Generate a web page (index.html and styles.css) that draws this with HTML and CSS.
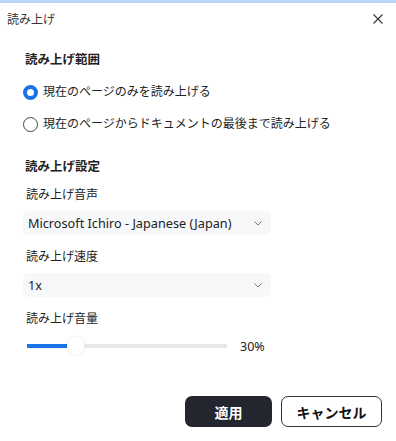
FILE: index.html
```html
<!DOCTYPE html>
<html lang="ja">
<head>
    <meta charset="UTF-8">
    <meta name="viewport" content="width=device-width, initial-scale=1.0">
    <title>読み上げ</title>
    <link rel="stylesheet" href="styles.css">
</head>
<body>
    <div class="dialog">
        <div class="dialog-header">
            <span class="dialog-title">読み上げ</span>
            <button class="close" aria-label="閉じる">
                <svg width="10" height="10" viewBox="0 0 10 10"><path d="M0.5 0.5 L9.5 9.5 M9.5 0.5 L0.5 9.5" stroke="#333" stroke-width="1.1" fill="none"/></svg>
            </button>
        </div>

        <div class="dialog-body">
            <div class="section-title">読み上げ範囲</div>
            <label class="radio-row">
                <input type="radio" name="range" checked>
                <span class="radio"></span>
                <span>現在のページのみを読み上げる</span>
            </label>
            <label class="radio-row">
                <input type="radio" name="range">
                <span class="radio"></span>
                <span>現在のページからドキュメントの最後まで読み上げる</span>
            </label>

            <div class="section-title settings">読み上げ設定</div>

            <div class="field-label">読み上げ音声</div>
            <div class="select">
                <span>Microsoft Ichiro - Japanese (Japan)</span>
                <svg class="chevron" width="8" height="5" viewBox="0 0 8 5"><path d="M0.5 0.5 L4 4 L7.5 0.5" stroke="#777" stroke-width="1" fill="none"/></svg>
            </div>

            <div class="field-label">読み上げ速度</div>
            <div class="select">
                <span>1x</span>
                <svg class="chevron" width="8" height="5" viewBox="0 0 8 5"><path d="M0.5 0.5 L4 4 L7.5 0.5" stroke="#777" stroke-width="1" fill="none"/></svg>
            </div>

            <div class="field-label">読み上げ音量</div>
            <div class="slider-row">
                <div class="slider">
                    <div class="slider-fill" style="width: 20%"></div>
                    <div class="slider-thumb"></div>
                    <div class="slider-rest"></div>
                </div>
                <span class="slider-value">30%</span>
            </div>
        </div>

        <div class="dialog-footer">
            <button class="btn primary">適用</button>
            <button class="btn secondary">キャンセル</button>
        </div>
    </div>
</body>
</html>
```

FILE: styles.css
```css
body {
    margin: 0;
    background-color: #ffffff;
    font-family: "Noto Sans", "Noto Sans CJK JP", sans-serif;
    color: #222;
}

.dialog {
    width: 396px;
    height: 441px;
    box-sizing: border-box;
    border-top: 3px solid #b5d5f3;
    display: flex;
    flex-direction: column;
}

.dialog-header {
    display: flex;
    justify-content: space-between;
    align-items: center;
    height: 32px;
    padding: 0 8px 0 7px;
}

.dialog-title {
    font-size: 12px;
    color: #333;
}

.close {
    background: none;
    border: none;
    padding: 0;
    width: 20px;
    height: 20px;
    display: flex;
    align-items: center;
    justify-content: center;
    cursor: pointer;
}

.dialog-body {
    padding: 16px 25px 0 23px;
    display: flex;
    flex-direction: column;
}

.section-title {
    font-size: 12.5px;
    font-weight: bold;
    margin-left: 2px;
    line-height: 18px;
    margin-bottom: 14px;
}

.section-title.settings {
    margin-top: 11px;
    margin-bottom: 10px;
}

.radio-row {
    display: flex;
    align-items: center;
    gap: 5px;
    font-size: 12px;
    line-height: 18px;
    margin-bottom: 14px;
    cursor: pointer;
}

.radio-row input {
    display: none;
}

.radio {
    width: 15px;
    height: 15px;
    box-sizing: border-box;
    border-radius: 50%;
    border: 1px solid #444;
    background: #fff;
}

.radio-row input:checked + .radio {
    border: 4.5px solid #1a73e8;
}

.field-label {
    font-size: 12px;
    line-height: 18px;
    margin-left: 3px;
    margin-bottom: 7px;
}

.select {
    width: 248px;
    height: 24px;
    box-sizing: border-box;
    background-color: #f7f8fa;
    border-radius: 5px;
    display: flex;
    align-items: center;
    justify-content: space-between;
    padding: 0 9px 0 5px;
    font-size: 12.7px;
    margin-bottom: 13px;
}

.chevron {
    margin-top: 1px;
}

.slider-row {
    display: flex;
    align-items: center;
    gap: 13px;
    margin-top: 2px;
    margin-left: 4px;
}

.slider {
    width: 200px;
    height: 18px;
    display: flex;
    align-items: center;
}

.slider-fill {
    height: 4px;
    background-color: #1a73e8;
}

.slider-thumb {
    width: 18px;
    height: 18px;
    border-radius: 50%;
    background: #fff;
    box-shadow: 0 0 3px rgba(0, 0, 0, 0.12);
    flex-shrink: 0;
}

.slider-rest {
    flex: 1;
    height: 4px;
    background-color: #e8e8e8;
    margin-left: -1px;
}

.slider-value {
    font-size: 12.5px;
}

.dialog-footer {
    margin-top: auto;
    display: flex;
    justify-content: flex-end;
    gap: 9px;
    padding: 0 14px 14px 0;
}

.btn {
    height: 31px;
    border-radius: 7px;
    font-family: "Noto Sans CJK JP", sans-serif;
    font-size: 14px;
    font-weight: bold;
    cursor: pointer;
    box-sizing: border-box;
}

.btn.primary {
    width: 87px;
    background-color: #23252f;
    color: #fff;
    border: none;
}

.btn.secondary {
    width: 101px;
    background-color: #fff;
    color: #111;
    border: 1px solid #333;
}
```
